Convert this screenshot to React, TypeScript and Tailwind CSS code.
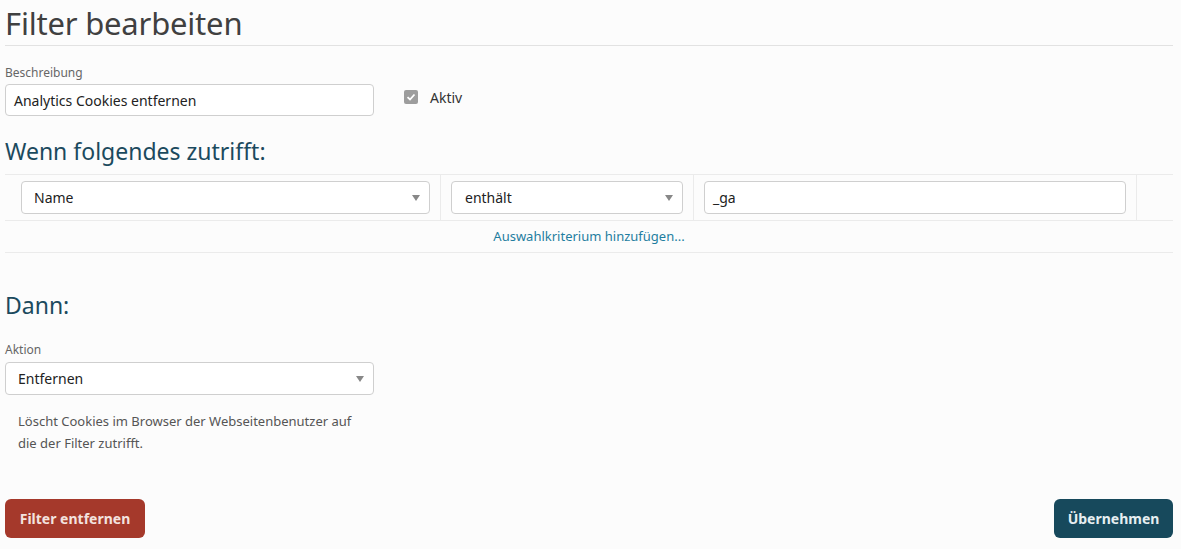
import React from "react";

const Caret = () => (
  <span className="absolute right-[9px] top-1/2 -translate-y-1/2 w-0 h-0 border-l-[4px] border-r-[4px] border-t-[6px] border-l-transparent border-r-transparent border-t-[#888]" />
);

const Select = ({ text, cls }: { text: string; cls: string }) => (
  <div className={`relative h-[33px] bg-white border border-[#cfcfcf] rounded-[4px] flex items-center text-[14px] text-[#222] ${cls}`}>
    {text}
    <Caret />
  </div>
);

export default function App() {
  return (
    <div className="w-[1181px] h-[549px] bg-[#fcfcfc] px-[5px] pr-[8px] font-['Open_Sans',sans-serif] flex flex-col">
      <h1 className="text-[31px] leading-[40px] text-[#404040] pt-[3px] pb-[2px] border-b border-[#e2e2e2] tracking-[-0.2px]">Filter bearbeiten</h1>
      <div className="mt-[19px] text-[12px] text-[#666] leading-[16px]">Beschreibung</div>
      <div className="flex items-center mt-[3px]">
        <div className="w-[369px] h-[32px] bg-white border border-[#cfcfcf] rounded-[4px] flex items-center px-[8px] text-[14px] text-[#222]">Analytics Cookies entfernen</div>
        <div className="ml-[30px] flex items-center gap-[12px] -mt-[6px]">
          <span className="w-[14px] h-[14px] rounded-[2px] bg-[#9d9d9d] flex items-center justify-center">
            <svg width="10" height="10" viewBox="0 0 10 10"><path d="M1.5 5.2 4 7.5 8.5 2.5" stroke="#fff" strokeWidth="1.8" fill="none" /></svg>
          </span>
          <span className="text-[14px] text-[#333]">Aktiv</span>
        </div>
      </div>
      <h2 className="mt-[20px] text-[23px] leading-[30px] text-[#1b4a5e]">Wenn folgendes zutrifft:</h2>
      <div className="mt-[8px] border-t border-b border-[#ebebeb]">
        <div className="flex h-[46px] border-b border-[#ebebeb]">
          <div className="w-[436px] flex items-center pl-[16px] pr-[10px] border-r border-[#ebebeb]">
            <Select text="Name" cls="w-full pl-[12px]" />
          </div>
          <div className="w-[253px] flex items-center px-[10px] border-r border-[#ebebeb]">
            <Select text="enthält" cls="w-full pl-[13px]" />
          </div>
          <div className="w-[443px] flex items-center px-[10px] border-r border-[#ebebeb]">
            <div className="w-full h-[33px] bg-white border border-[#cfcfcf] rounded-[4px] flex items-center px-[8px] text-[14px] text-[#222]">_ga</div>
          </div>
          <div className="flex-1" />
        </div>
        <div className="h-[31px] flex items-center justify-center text-[13px] text-[#1f7ea0]">Auswahlkriterium hinzufügen...</div>
      </div>
      <h2 className="mt-[37px] text-[23px] leading-[30px] text-[#1b4a5e]">Dann:</h2>
      <div className="mt-[22px] text-[12px] text-[#666] leading-[16px]">Aktion</div>
      <Select text="Entfernen" cls="w-[369px] pl-[12px] mt-[4px] h-[32px]" />
      <p className="mt-[15px] pl-[13px] w-[360px] text-[13px] leading-[22px] text-[#555]">Löscht Cookies im Browser der Webseitenbenutzer auf die der Filter zutrifft.</p>
      <div className="mt-[45px] flex justify-between">
        <button className="h-[39px] w-[140px] rounded-[6px] bg-[#a5392b] text-[#f3e2df] font-bold text-[14px]">Filter entfernen</button>
        <button className="h-[39px] w-[119px] rounded-[6px] bg-[#17495c] text-[#e6eef1] font-bold text-[14px]">Übernehmen</button>
      </div>
    </div>
  );
}
